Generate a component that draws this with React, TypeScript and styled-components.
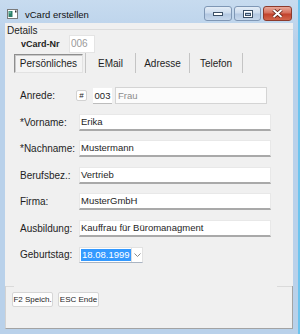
import React from "react";
import styled, { createGlobalStyle } from "styled-components";

const GlobalStyle = createGlobalStyle`
  html, body {
    margin: 0;
    padding: 0;
    background: #bcd4ec;
  }
  body {
    font-family: "Liberation Sans", Arial, sans-serif;
    color: #1e1e1e;
  }
`;

const Window = styled.div`
  width: 300px;
  height: 334px;
  box-sizing: border-box;
  padding: 0 5px 5px 5px;
  background: linear-gradient(#c7dbef, #b9d1ea 40px);
  border-right: 2px solid #6cc4ee;
  display: flex;
  flex-direction: column;
  overflow: hidden;
`;

const TitleBar = styled.div`
  height: 23px;
  display: flex;
  align-items: flex-start;
  padding-right: 1px;
`;

const TitleIcon = styled.svg`
  margin: 9px 0 0 2px;
  flex: none;
`;

const TitleText = styled.div`
  font-size: 9.5px;
  margin: 9px 0 0 7px;
  line-height: 11px;
  color: #111;
  flex: 1;
`;

const CaptionButton = styled.div<{ $w: number; $close?: boolean }>`
  width: ${(p) => p.$w}px;
  height: 15px;
  margin-top: 6px;
  margin-left: 2px;
  box-sizing: border-box;
  border: 1px solid ${(p) => (p.$close ? "#8c3a2c" : "#7f97b5")};
  border-radius: 3px;
  background: ${(p) =>
    p.$close
      ? "linear-gradient(#e9a99a, #d6705d 45%, #c2422c 55%, #d2664c)"
      : "linear-gradient(#e4edf7, #cddcee 45%, #b3c8e2 55%, #c7d8ec)"};
  display: flex;
  align-items: center;
  justify-content: center;
`;

const Client = styled.div`
  flex: 1;
  background: #f0f0f0;
  display: flex;
  flex-direction: column;
`;

const GroupHead = styled.div`
  display: flex;
  height: 10px;
  margin-top: 2px;
  padding-left: 2px;
`;

const GroupLabel = styled.div`
  font-size: 10px;
  line-height: 11px;
  padding-right: 2px;
`;

const GroupLine = styled.div`
  flex: 1;
  height: 1px;
  margin-top: 4px;
  background: #dcdcdc;
`;

const NrRow = styled.div`
  display: flex;
  align-items: center;
  height: 18px;
  padding-left: 16px;
`;

const NrLabel = styled.div`
  font-size: 9px;
  font-weight: bold;
  width: 48px;
`;

const NrBox = styled.div`
  width: 26px;
  height: 18px;
  box-sizing: border-box;
  background: #fff;
  border: 1px solid #e4e4e4;
  color: #9a9a9a;
  font-size: 10px;
  line-height: 16px;
  padding-left: 1px;
`;

const Tabs = styled.div`
  display: flex;
  height: 20px;
  padding-left: 9px;
`;

const Tab = styled.div<{ $w: number; $active?: boolean; $last?: boolean }>`
  width: ${(p) => p.$w}px;
  box-sizing: border-box;
  font-size: 10px;
  display: flex;
  align-items: center;
  justify-content: center;
  ${(p) =>
    p.$active
      ? `
    margin-top: 1px;
    margin-right: 2px;
    height: 19px;
    background: #f4f4f4;
    border: 1px solid;
    border-color: #8e8e8e #e2e2e2 #e2e2e2 #8e8e8e;
    box-shadow: inset 1px 1px 0 #c9c9c9;
  `
      : `
    height: 20px;
    border-left: 1px solid #c4c4c4;
    ${p.$last ? "border-right: 1px solid #c4c4c4;" : ""}
  `}
`;

const Form = styled.div`
  display: flex;
  flex-direction: column;
  gap: 9.5px;
  margin-top: 14px;
  padding-left: 15px;
`;

const Row = styled.div`
  display: flex;
  align-items: center;
  height: 17px;
`;

const Label = styled.div<{ $w?: number }>`
  width: ${(p) => p.$w ?? 59}px;
  font-size: 10px;
  white-space: nowrap;
  flex: none;
`;

const Input = styled.div<{ $w?: number }>`
  width: ${(p) => p.$w ?? 192}px;
  height: 17px;
  box-sizing: border-box;
  background: #fff;
  border: 1px solid #e8e8e8;
  border-bottom: 2px solid #a9a9a9;
  font-size: 9.5px;
  line-height: 14px;
  padding-left: 1px;
  white-space: nowrap;
  overflow: hidden;
`;

const HashButton = styled.div`
  width: 11px;
  height: 11px;
  box-sizing: border-box;
  border: 1px solid #d2d2d2;
  border-radius: 2px;
  background: #fff;
  font-size: 8px;
  line-height: 9px;
  text-align: center;
  margin-right: 6px;
`;

const NumBox = styled.div`
  width: 19px;
  height: 16px;
  box-sizing: border-box;
  background: #fff;
  border-bottom: 1px solid #bdbdbd;
  font-size: 9.5px;
  line-height: 15px;
  text-align: center;
  margin-right: 3px;
`;

const DisabledBox = styled.div`
  width: 152px;
  height: 17px;
  box-sizing: border-box;
  background: #fbfbfb;
  border: 1px solid #d4d4d4;
  color: #8c8c8c;
  font-size: 9.5px;
  line-height: 15px;
  padding-left: 2px;
`;

const DateBox = styled.div`
  width: 64px;
  height: 16px;
  box-sizing: border-box;
  background: #fff;
  border: 1px solid #e2e2e2;
  border-bottom-color: #aab4c2;
  display: flex;
  align-items: center;
  padding-left: 1px;
`;

const Selected = styled.span`
  background: #3399ff;
  color: #fff;
  font-size: 9.5px;
  line-height: 12px;
  padding: 0 1px;
  width: 48px;
  overflow: hidden;
  white-space: nowrap;
`;

const DropArrow = styled.div`
  margin-left: auto;
  width: 10px;
  height: 14px;
  border-left: 1px solid #dedede;
  display: flex;
  align-items: center;
  justify-content: center;
`;

const Footer = styled.div`
  margin-top: auto;
  height: 43px;
  box-sizing: border-box;
  border-left: 1px solid #d2d2d2;
  border-right: 1px solid #a3a3a3;
  border-bottom: 1px solid #a3a3a3;
  display: flex;
  flex-direction: column;
`;

const FooterEdge = styled.div`
  display: flex;
  justify-content: space-between;
  height: 1px;
`;

const EdgeBit = styled.div<{ $w: number }>`
  width: ${(p) => p.$w}px;
  background: #dadada;
`;

const ButtonRow = styled.div`
  display: flex;
  gap: 5px;
  padding: 5px 0 0 6px;
`;

const KeyButton = styled.div`
  width: 41px;
  height: 15px;
  box-sizing: border-box;
  background: #fdfdfd;
  border: 1px solid #d6d6d6;
  border-radius: 2px;
  font-size: 8px;
  line-height: 13px;
  text-align: center;
  white-space: nowrap;
`;

const fields: { label: string; value: string }[] = [
  { label: "*Vorname:", value: "Erika" },
  { label: "*Nachname:", value: "Mustermann" },
  { label: "Berufsbez.:", value: "Vertrieb" },
  { label: "Firma:", value: "MusterGmbH" },
  { label: "Ausbildung:", value: "Kauffrau für Büromanagment" },
];

const tabs = [
  { name: "Persönliches", w: 69, active: true },
  { name: "EMail", w: 50 },
  { name: "Adresse", w: 54 },
  { name: "Telefon", w: 54, last: true },
];

const App: React.FC = () => (
  <>
    <GlobalStyle />
    <Window>
      <TitleBar>
        <TitleIcon width="11" height="10" viewBox="0 0 11 10">
          <rect x="0.5" y="0.5" width="10" height="9" fill="#fff" stroke="#7a7a7a" />
          <rect x="1.5" y="2" width="4" height="6" fill="#2f7f6a" />
          <rect x="2" y="2.5" width="2" height="2" fill="#5fb39a" />
          <rect x="8" y="1.5" width="1.5" height="2" fill="#333" />
        </TitleIcon>
        <TitleText>vCard erstellen</TitleText>
        <CaptionButton $w={28}>
          <svg width="10" height="4" viewBox="0 0 10 4">
            <rect x="0.5" y="0.5" width="9" height="3" fill="#fff" stroke="#3b4f66" />
          </svg>
        </CaptionButton>
        <CaptionButton $w={27}>
          <svg width="10" height="8" viewBox="0 0 10 8">
            <rect x="0.5" y="0.5" width="9" height="7" fill="none" stroke="#3b4f66" />
            <rect x="1.5" y="1.5" width="7" height="5" fill="none" stroke="#fff" />
            <rect x="2.5" y="3.5" width="5" height="2" fill="none" stroke="#3b4f66" />
          </svg>
        </CaptionButton>
        <CaptionButton $w={29} $close>
          <svg width="11" height="9" viewBox="0 0 11 9">
            <path d="M1.5 1 L9.5 8 M9.5 1 L1.5 8" stroke="#5a1e14" strokeWidth="3.6" />
            <path d="M1.5 1 L9.5 8 M9.5 1 L1.5 8" stroke="#fff" strokeWidth="2" />
          </svg>
        </CaptionButton>
      </TitleBar>
      <Client>
        <GroupHead>
          <GroupLabel>Details</GroupLabel>
          <GroupLine />
        </GroupHead>
        <NrRow>
          <NrLabel>vCard-Nr</NrLabel>
          <NrBox>006</NrBox>
        </NrRow>
        <Tabs>
          {tabs.map((t) => (
            <Tab key={t.name} $w={t.w} $active={t.active} $last={t.last}>
              {t.name}
            </Tab>
          ))}
        </Tabs>
        <Form>
          <Row>
            <Label $w={56}>Anrede:</Label>
            <HashButton>#</HashButton>
            <NumBox>003</NumBox>
            <DisabledBox>Frau</DisabledBox>
          </Row>
          {fields.map((f) => (
            <Row key={f.label}>
              <Label>{f.label}</Label>
              <Input>{f.value}</Input>
            </Row>
          ))}
          <Row>
            <Label>Geburtstag:</Label>
            <DateBox>
              <Selected>18.08.1999</Selected>
              <DropArrow>
                <svg width="7" height="4" viewBox="0 0 7 4">
                  <path d="M0.5 0.5 L3.5 3.5 L6.5 0.5" fill="none" stroke="#8a8a8a" />
                </svg>
              </DropArrow>
            </DateBox>
          </Row>
        </Form>
        <Footer>
          <FooterEdge>
            <EdgeBit $w={8} />
            <EdgeBit $w={15} />
          </FooterEdge>
          <ButtonRow>
            <KeyButton>F2 Speich.</KeyButton>
            <KeyButton>ESC Ende</KeyButton>
          </ButtonRow>
        </Footer>
      </Client>
    </Window>
  </>
);

export default App;
